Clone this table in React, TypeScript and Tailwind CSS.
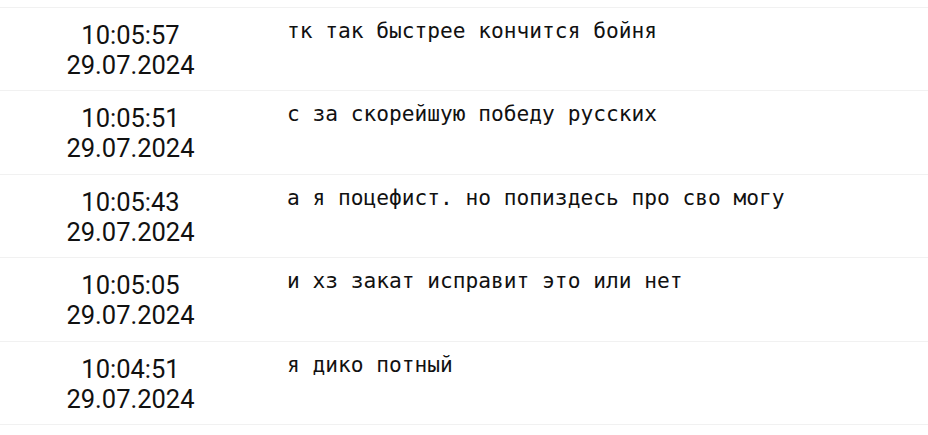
import React from "react";

const rows = [
  { time: "10:05:57", date: "29.07.2024", text: "тк так быстрее кончится бойня" },
  { time: "10:05:51", date: "29.07.2024", text: "с за скорейшую победу русских" },
  { time: "10:05:43", date: "29.07.2024", text: "а я поцефист. но попиздесь про сво могу" },
  { time: "10:05:05", date: "29.07.2024", text: "и хз закат исправит это или нет" },
  { time: "10:04:51", date: "29.07.2024", text: "я дико потный" },
];

export default function App() {
  return (
    <div className="w-[928px] h-[435px] bg-white overflow-hidden">
      <div className="h-[7px] border-b border-[#f1f1f1] box-content" />
      {rows.map((r, i) => (
        <div
          key={i}
          className="flex h-[83.4px] border-b border-[#f1f1f1] items-start pt-[12px]"
        >
          <div
            className="w-[261px] shrink-0 text-center text-[25.5px] leading-[30px] text-[#111]"
            style={{ fontFamily: "Roboto, sans-serif" }}
          >
            <div>{r.time}</div>
            <div>{r.date}</div>
          </div>
          <div
            className="pl-[26px] -mt-[4px] text-[21.2px] leading-[30px] text-[#111] whitespace-pre"
            style={{ fontFamily: '"DejaVu Sans Mono", monospace' }}
          >
            {r.text}
          </div>
        </div>
      ))}
    </div>
  );
}
